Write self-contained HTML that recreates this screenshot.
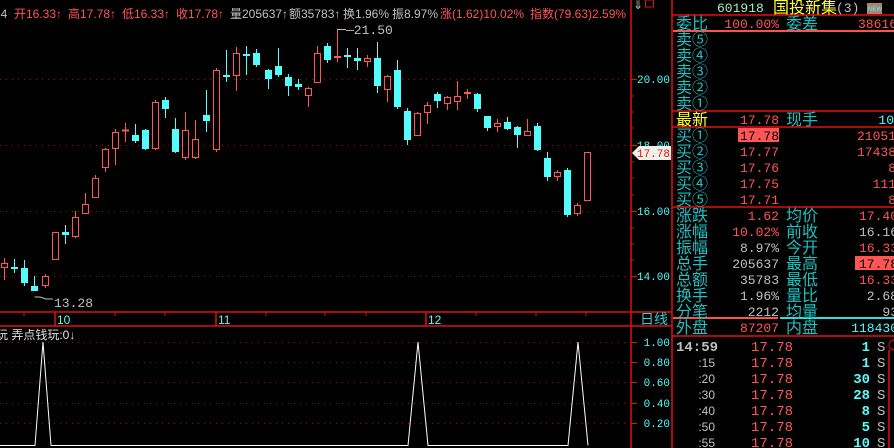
<!DOCTYPE html>
<html><head><meta charset="utf-8"><style>
html,body{margin:0;padding:0;background:#000;width:894px;height:448px;overflow:hidden}
svg{display:block}
.m{font-family:"Liberation Mono",monospace;font-size:13px}
.a{font-family:"Liberation Mono",monospace;font-size:11px}
.c{font-family:"Liberation Sans","WenQuanYi Zen Hei","Noto Sans CJK SC",sans-serif;font-size:16px}
.s{font-family:"Liberation Sans","WenQuanYi Zen Hei","Noto Sans CJK SC",sans-serif;font-size:12px}
</style></head><body>
<svg width="894" height="448" viewBox="0 0 894 448" xmlns="http://www.w3.org/2000/svg">
<g stroke="#a01010" stroke-dasharray="1,5" stroke-width="1">
<line x1="0" y1="79.5" x2="628" y2="79.5"/><line x1="0" y1="145.5" x2="628" y2="145.5"/>
<line x1="0" y1="211.5" x2="628" y2="211.5"/><line x1="0" y1="276.5" x2="628" y2="276.5"/>
<line x1="0" y1="342.5" x2="628" y2="342.5"/><line x1="0" y1="362.5" x2="628" y2="362.5"/>
<line x1="0" y1="382.5" x2="628" y2="382.5"/><line x1="0" y1="403.5" x2="628" y2="403.5"/>
<line x1="0" y1="423.5" x2="628" y2="423.5"/>
</g>
<g stroke="#e01010" stroke-width="1.5">
<line x1="631" y1="0" x2="631" y2="448"/><line x1="672" y1="0" x2="672" y2="448"/>
<line x1="0" y1="312" x2="672" y2="312"/><line x1="0" y1="326" x2="672" y2="326"/>
<line x1="672" y1="15" x2="894" y2="15"/><line x1="672" y1="111" x2="894" y2="111"/>
<line x1="672" y1="127" x2="894" y2="127"/><line x1="672" y1="207" x2="894" y2="207"/>
<line x1="672" y1="336" x2="894" y2="336"/><line x1="889" y1="350" x2="889" y2="448"/>
<line x1="55" y1="312" x2="55" y2="326"/><line x1="216" y1="312" x2="216" y2="326"/><line x1="426" y1="312" x2="426" y2="326"/>
</g>
<line x1="673" y1="31" x2="894" y2="31" stroke="#ff5050" stroke-width="2"/>
<line x1="673" y1="318" x2="778" y2="318" stroke="#ff5050" stroke-width="2"/>
<line x1="780" y1="318" x2="894" y2="318" stroke="#30e0e0" stroke-width="2"/>
<path d="M24 312v4M115 312v4M165 312v4M266 312v4M325 312v4M366 312v4M476 312v4M536 312v4M586 312v4M631 79.5h6M631 145.5h6M631 211.5h6M631 276.5h6M631 342.5h6M631 362.5h6M631 382.5h6M631 403.5h6M631 423.5h6M631 96h3M631 112h3M631 128h3M631 162h3M631 178h3M631 195h3M631 228h3M631 244h3M631 260h3" stroke="#e01010" stroke-width="1"/>
<path stroke="#ff5555" stroke-width="1" d="M4.5 258V280M45.5 274V288M55.5 232V259M75.5 211V238M85.5 193V213M95.5 175V197M105.5 148V172M115.5 129V165M125.5 123V142M155.5 100V150M185.5 112V160M195.5 120V159M216.5 68V152M236.5 47V91M308.5 87V107M317.5 46V82M337.5 30V62M367.5 55V67M387.5 75V102M417.5 112V135M427.5 102V124M447.5 96V110M457.5 81V110M467.5 89V99M497.5 119V132M527.5 119V135M557.5 170V181M577.5 203V216M587.5 152V200"/>
<path stroke="#55fcfc" stroke-width="1" d="M14.5 259V273M24.5 260V286M34.5 276V290M65.5 225V244M135.5 124V143M145.5 129V150M165.5 97V118M175.5 118V153M206.5 90V132M226.5 50V82M246.5 46V75M256.5 49V67M268.5 69V89M278.5 48V77M288.5 74V96M298.5 79V90M327.5 43V63M347.5 48V68M357.5 48V70M377.5 42V93M397.5 60V109M407.5 108V145M437.5 92V108M477.5 93V112M487.5 116V131M507.5 117V130M517.5 126V148M537.5 123V151M547.5 152V181M567.5 168V217"/>
<g fill="#000" stroke="#ff5555" stroke-width="1">
<rect x="1.5" y="263.5" width="6" height="4"/><rect x="42.5" y="276.5" width="6" height="9"/><rect x="52.5" y="232.5" width="6" height="27"/>
<rect x="72.5" y="217.5" width="6" height="19"/><rect x="82.5" y="204.5" width="6" height="9"/><rect x="92.5" y="178.5" width="6" height="19"/>
<rect x="102.5" y="149.5" width="6" height="18"/><rect x="112.5" y="132.5" width="6" height="16"/><rect x="122.5" y="130" width="6" height="1"/>
<rect x="152.5" y="102.5" width="6" height="46"/><rect x="182.5" y="130.5" width="6" height="27"/><rect x="192.5" y="139.5" width="6" height="18"/>
<rect x="213.5" y="70.5" width="6" height="79"/><rect x="233.5" y="53.5" width="6" height="22"/><rect x="305.5" y="88.5" width="6" height="7"/>
<rect x="314.5" y="53.5" width="6" height="29"/><rect x="334.5" y="56.5" width="6" height="1"/><rect x="364.5" y="58.5" width="6" height="3"/>
<rect x="384.5" y="76.5" width="6" height="13"/><rect x="414.5" y="113.5" width="6" height="22"/>
<rect x="424.5" y="105.5" width="6" height="7"/><rect x="444.5" y="97.5" width="6" height="6"/><rect x="454.5" y="96.5" width="6" height="5"/>
<rect x="464.5" y="92.5" width="6" height="1"/><rect x="494.5" y="123.5" width="6" height="3"/><rect x="524.5" y="131.5" width="6" height="4"/>
<rect x="554.5" y="172.5" width="6" height="4"/><rect x="574.5" y="205.5" width="6" height="8"/><rect x="584.5" y="152.5" width="6" height="48"/>
</g>
<g fill="#55fcfc">
<rect x="11" y="267" width="7" height="2"/><rect x="21" y="268" width="7" height="15"/><rect x="31" y="286" width="7" height="5"/>
<rect x="62" y="232" width="7" height="3"/><rect x="132" y="135" width="7" height="6"/><rect x="142" y="130" width="7" height="19"/>
<rect x="162" y="100" width="7" height="9"/><rect x="172" y="129" width="7" height="23"/><rect x="203" y="115" width="7" height="6"/>
<rect x="223" y="75" width="7" height="2"/><rect x="243" y="54" width="7" height="2"/><rect x="253" y="53" width="7" height="12"/>
<rect x="265" y="70" width="7" height="9"/><rect x="275" y="66" width="7" height="9"/><rect x="285" y="77" width="7" height="9"/>
<rect x="295" y="84" width="7" height="3"/><rect x="324" y="46" width="7" height="14"/><rect x="344" y="55" width="7" height="2"/>
<rect x="354" y="58" width="7" height="3"/><rect x="374" y="58" width="7" height="28"/><rect x="394" y="70" width="7" height="37"/>
<rect x="404" y="111" width="7" height="29"/><rect x="434" y="94" width="7" height="7"/><rect x="474" y="94" width="7" height="15"/>
<rect x="484" y="116" width="7" height="12"/><rect x="504" y="122" width="7" height="7"/><rect x="514" y="127" width="7" height="8"/>
<rect x="534" y="126" width="7" height="24"/><rect x="544" y="158" width="7" height="19"/><rect x="564" y="170" width="7" height="45"/>
</g>
<path d="M337.5 30V29.5H346" stroke="#c0c0c0" fill="none"/>
<path d="M34.5 297H40L46 299H53" stroke="#c0c0c0" fill="none"/>
<text x="346" y="34" class="m" fill="#c0c0c0">—21.50</text>
<text x="54" y="307" class="m" fill="#c0c0c0">13.28</text>
<g class="s" fill="#ff5555">
<text x="-6" y="18" fill="#c0c0c0">24</text>
<text x="14" y="18">开16.33↑</text><text x="68" y="18">高17.78↑</text><text x="122" y="18">低16.33↑</text><text x="176" y="18">收17.78↑</text>
<text x="230" y="18" fill="#c0c0c0">量205637↑</text><text x="289" y="18" fill="#c0c0c0">额35783↑</text>
<text x="343" y="18" fill="#c0c0c0">换1.96%</text><text x="392" y="18" fill="#c0c0c0">振8.97%</text>
<text x="440" y="18">涨(1.62)10.02%</text><text x="530" y="18">指数(79.63)2.59%</text>
</g>
<text x="633" y="9" class="s" fill="#c0c0c0">⇓</text>
<rect x="645.5" y="0" width="8" height="7" fill="none" stroke="#e01010"/>
<g class="a" fill="#55fcfc" text-anchor="end">
<text x="670" y="83">20.00</text><text x="670" y="149">18.00</text><text x="670" y="215">16.00</text><text x="670" y="280">14.00</text>
<text x="670" y="346">1.00</text><text x="670" y="366">0.80</text><text x="670" y="386">0.60</text><text x="670" y="407">0.40</text><text x="670" y="427">0.20</text>
</g>
<path d="M632 153L639 146H671V160H639Z" fill="#f0f0e8"/>
<text x="670" y="157" class="a" text-anchor="end" fill="#e01010">17.78</text>
<g class="s" fill="#55fcfc"><text x="57" y="324">10</text><text x="218" y="324">11</text><text x="428" y="324">12</text></g>
<text x="640" y="324" class="c" style="font-size:14px" fill="#30d0d0">日线</text>
<text x="-4" y="339" class="s" fill="#e0e0e0">玩 弄点钱玩:0↓</text>
<path d="M0 445.5H35L43 342L51 445.5H408L418 342L428 445.5H568L578 342L588 445.5" stroke="#fff" fill="none" stroke-width="1"/>
<text x="717" y="12" class="m" fill="#a0f0c0">601918</text>
<text x="773" y="13" class="c" fill="#ffff30">国投新集</text>
<text x="836" y="12" class="m" fill="#c0c0c0">(3)</text>
<rect x="867" y="3" width="15" height="11" fill="#b08070"/>
<text x="868" y="11" font-family="Liberation Sans" font-size="6" fill="#40ffff">NEW</text>
<g class="c" fill="#20c0c0">
<text x="676" y="29">委比</text><text x="786" y="29">委差</text>
<text x="676" y="45">卖⑤</text><text x="676" y="61">卖④</text><text x="676" y="77">卖③</text><text x="676" y="93">卖②</text><text x="676" y="109">卖①</text>
<text x="676" y="125" fill="#ffff30">最新</text><text x="786" y="125">现手</text>
<text x="676" y="141">买①</text><text x="676" y="157">买②</text><text x="676" y="173">买③</text><text x="676" y="189">买④</text><text x="676" y="205">买⑤</text>
<text x="676" y="221">涨跌</text><text x="786" y="221">均价</text>
<text x="676" y="237">涨幅</text><text x="786" y="237">前收</text>
<text x="676" y="253">振幅</text><text x="786" y="253">今开</text>
<text x="676" y="269">总手</text><text x="786" y="269">最高</text>
<text x="676" y="285">总额</text><text x="786" y="285">最低</text>
<text x="676" y="301">换手</text><text x="786" y="301">量比</text>
<text x="676" y="317">分笔</text><text x="786" y="317">均量</text>
<text x="676" y="333">外盘</text><text x="786" y="333">内盘</text>
</g>
<rect x="738" y="128" width="41" height="14" fill="#ff5555"/>
<rect x="855" y="256" width="40" height="14" fill="#ff5555"/>
<g class="m" fill="#ff5555" text-anchor="end">
<text x="779" y="28">100.00%</text><text x="897" y="28">38616</text>
<text x="779" y="124">17.78</text><text x="894" y="124" fill="#55fcfc">10</text>
<text x="779" y="140" fill="#000">17.78</text><text x="896" y="140">21051</text>
<text x="779" y="156">17.77</text><text x="896" y="156">17438</text>
<text x="779" y="172">17.76</text><text x="896" y="172">8</text>
<text x="779" y="188">17.75</text><text x="896" y="188">111</text>
<text x="779" y="204">17.71</text><text x="896" y="204">8</text>
<text x="779" y="220">1.62</text><text x="898" y="220">17.40</text>
<text x="779" y="236">10.02%</text><text x="898" y="236" fill="#c0c0c0">16.16</text>
<text x="779" y="252" fill="#c0c0c0">8.97%</text><text x="898" y="252">16.33</text>
<text x="779" y="268" fill="#c0c0c0">205637</text><text x="898" y="268" fill="#000">17.78</text>
<text x="779" y="284" fill="#c0c0c0">35783</text><text x="898" y="284">16.33</text>
<text x="779" y="300" fill="#c0c0c0">1.96%</text><text x="898" y="300" fill="#c0c0c0">2.68</text>
<text x="779" y="316" fill="#c0c0c0">2212</text><text x="898" y="316" fill="#c0c0c0">93</text>
<text x="779" y="332">87207</text><text x="898" y="332" fill="#55fcfc">118430</text>
</g>
<text x="676" y="351" class="m" style="font-size:14px;font-weight:bold" fill="#c0c0c0">14:59</text>
<g class="s" fill="#c0c0c0" text-anchor="end">
<text x="715" y="367">:15</text><text x="715" y="383">:20</text><text x="715" y="399">:30</text><text x="715" y="415">:40</text><text x="715" y="431">:50</text><text x="715" y="447">:55</text>
</g>
<g class="m" style="font-size:14px" fill="#ff5555">
<text x="751" y="351">17.78</text><text x="751" y="367">17.78</text><text x="751" y="383">17.78</text><text x="751" y="399">17.78</text><text x="751" y="415">17.78</text><text x="751" y="431">17.78</text><text x="751" y="447">17.78</text>
</g>
<g class="m" style="font-size:14px;font-weight:bold" fill="#55fcfc" text-anchor="end">
<text x="870" y="351">1</text><text x="870" y="367">1</text><text x="870" y="383">30</text><text x="870" y="399">28</text><text x="870" y="415">8</text><text x="870" y="431">5</text><text x="870" y="447">10</text>
</g>
<g class="m" style="font-size:14px" fill="#c0c0c0">
<text x="877" y="351">S</text><text x="877" y="367">S</text><text x="877" y="383">S</text><text x="877" y="399">S</text><text x="877" y="415">S</text><text x="877" y="431">S</text><text x="877" y="447">S</text>
</g>
<circle cx="894" cy="345" r="5" fill="none" stroke="#e01010"/>
</svg>
</body></html>
